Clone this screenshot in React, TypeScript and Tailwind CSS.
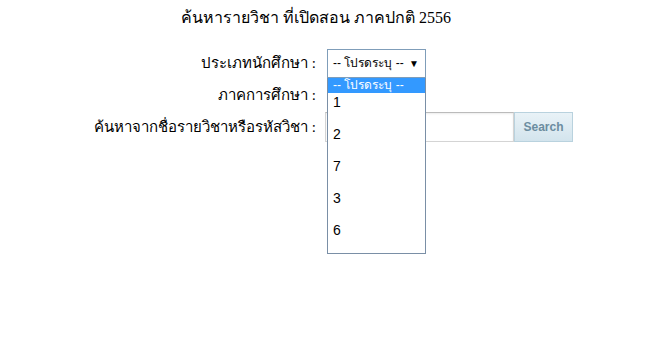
const options = ["1", "2", "7", "3", "6"];

export default function App() {
  return (
    <div className="w-[662px] h-[346px] bg-white text-black font-['Liberation_Serif',serif]">
      <div className="w-[632px] text-center pt-[8px] text-[16px] leading-[20px]">
        ค้นหารายวิชา ที่เปิดสอน ภาคปกติ 2556
      </div>

      <div className="relative mt-[20px] grid grid-cols-[320px_auto] gap-x-[5px] gap-y-[2px] items-center text-[15px]">
        <div className="text-right pr-[4px]">ประเภทนักศึกษา :</div>
        <div className="pl-[2px] h-[30px] flex items-center">
          <div className="w-[99px] h-[29px] border border-[#7f9db9] flex items-center justify-between pl-[5px] pr-[6px] font-['Liberation_Sans',sans-serif] text-[12px]">
            <span>-- โปรดระบุ --</span>
            <span className="text-[10px]">▼</span>
          </div>
        </div>

        <div className="text-right pr-[4px]">ภาคการศึกษา :</div>
        <div className="h-[30px]" />

        <div className="text-right pr-[4px]">ค้นหาจากชื่อรายวิชาหรือรหัสวิชา :</div>
        <div className="flex h-[30px]">
          <div className="w-[189px] h-[30px] border border-[#d4d4d4] border-t-[#bbbbbb] shadow-[inset_0_1px_2px_rgba(0,0,0,0.08)]" />
          <button className="w-[59px] h-[30px] border border-[#b9d2de] bg-gradient-to-b from-[#e9f2f7] to-[#d3e4ed] text-[#6c8da0] font-bold text-[12px] font-['Liberation_Sans',sans-serif]">
            Search
          </button>
        </div>

        <div className="absolute left-[327px] top-[30px] w-[99px] h-[176px] bg-white border border-[#7a8fa6] border-t-0 font-['Liberation_Sans',sans-serif] text-[13px]">
          <div className="bg-[#3399ff] text-white h-[15px] leading-[15px] pl-[5px] text-[12px]">-- โปรดระบุ --</div>
          {options.map((o) => (
            <div key={o} className="h-[32px] px-[5px] pt-[1px] leading-[16px] text-[14px]">
              {o}
            </div>
          ))}
        </div>
      </div>
    </div>
  );
}
